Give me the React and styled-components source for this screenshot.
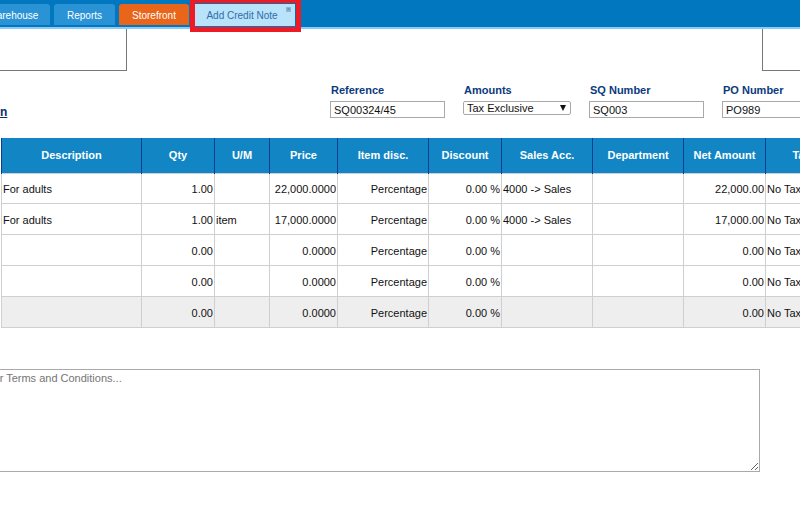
import { createGlobalStyle, styled } from "styled-components"

const GlobalStyle = createGlobalStyle`
    html, body {
        margin: 0;
        background: #fff;
        font-family: "Liberation Sans", Arial, sans-serif;
        font-size: 11px;
        color: #111;
    }
`

const Page = styled.div`
    width: 800px;
    height: 506px;
    overflow: hidden;
`

const Nav = styled.div`
    display: flex;
    align-items: flex-start;
    gap: 4px;
    height: 27px;
    margin-left: -24px;
    padding-top: 4px;
    box-sizing: border-box;
    background: #0077be;
`
const NavLine = styled.div`
    height: 2px;
    background: #8ccaf7;
`
const Tab = styled.div`
    display: flex;
    flex: none;
    align-items: center;
    justify-content: center;
    width: ${({ $width }) => $width}px;
    height: 21px;
    padding-top: 1px;
    box-sizing: border-box;
    border-radius: 3px 3px 0 0;
    background: ${({ $orange }) => ($orange ? "#e8651a" : "#2a93d5")};
    color: #fff;
    font-size: 10px;
`
const ActiveTab = styled(Tab)`
    position: relative;
    width: 101px;
    height: 23px;
    margin: -1px 0 0 2px;
    padding-right: 6px;
    border-radius: 0;
    background: #b9e3fb;
    color: #2d6ea8;
    border-top: 1px solid #0d6aa8;
    border-right: 1px solid #0d6aa8;
`
const CloseMark = styled.span`
    position: absolute;
    top: 3px;
    right: 4px;
    width: 5px;
    height: 5px;
    background: #8fb6d6;
    color: #4d86b5;
    font-size: 6px;
    line-height: 5px;
    text-align: center;
`
const Highlight = styled.div`
    position: absolute;
    top: -4px;
    left: -5px;
    right: -6px;
    bottom: -6px;
    border: solid #ed1c24;
    border-width: 3px 5px 5px 5px;
    pointer-events: none;
`

const TopBoxes = styled.div`
    display: flex;
    justify-content: space-between;
    height: 42px;
    margin-right: -10px;
`
const AddressBox = styled.div`
    width: ${({ $width }) => $width}px;
    box-sizing: border-box;
    border-bottom: 1px solid #777;
    border-${({ $side }) => $side}: 1px solid #777;
`

const FormRow = styled.div`
    display: flex;
    height: 54px;
    margin-top: 13px;
`
const LinkSlot = styled.div`
    flex: none;
    width: 330px;
    padding-top: 21px;
    box-sizing: border-box;
`
const BackLink = styled.a`
    color: #0b2f6b;
    font-size: 12px;
    font-weight: bold;
    text-decoration: underline;
`
const Fields = styled.div`
    display: flex;
    flex: none;
    gap: 18px;
`
const Field = styled.div`
    display: flex;
    flex: none;
    flex-direction: column;
    gap: 5px;
    width: ${({ $width }) => $width}px;
`
const Label = styled.label`
    height: 12px;
    padding-left: 1px;
    line-height: 12px;
    color: #0b3a7e;
    font-weight: bold;
`
const TextInput = styled.input`
    width: 100%;
    height: 17px;
    margin: 0;
    padding: 0 3px;
    box-sizing: border-box;
    border: 1px solid #a9a9a9;
    border-radius: 0;
    outline: none;
    font: 11px "Liberation Sans", Arial, sans-serif;
    color: #111;
`
const FakeSelect = styled.div`
    display: flex;
    align-items: center;
    justify-content: space-between;
    height: 14px;
    padding: 0 4px 0 3px;
    box-sizing: border-box;
    border: 1px solid #a9a9a9;
    border-radius: 2px;
    font-size: 11px;
`
const Caret = styled.span`
    width: 0;
    height: 0;
    border-left: 3.5px solid transparent;
    border-right: 3.5px solid transparent;
    border-top: 6px solid #111;
`

const TableWrap = styled.div`
    margin-left: 1px;
`
const Grid = styled.table`
    width: 786px;
    table-layout: fixed;
    border-collapse: collapse;
`
const HeadCell = styled.th`
    height: 35px;
    padding: 0;
    box-sizing: border-box;
    background: #1285c4;
    border-left: 1px solid #0d3e94;
    border-right: 1px solid #0d3e94;
    color: #fff;
    font-size: 11px;
    font-weight: bold;
    text-align: center;
`
const Row = styled.tr`
    background: ${({ $shaded }) => ($shaded ? "#eeeeee" : "#fff")};
`
const Cell = styled.td`
    height: ${({ $first }) => ($first ? 30 : 31)}px;
    padding: 2px 1px 0;
    box-sizing: border-box;
    border: 1px solid #cfcfcf;
    font-size: 11px;
    white-space: nowrap;
    overflow: hidden;
    text-align: ${({ $right }) => ($right ? "right" : "left")};
`

const Terms = styled.textarea`
    display: block;
    width: 786px;
    height: 103px;
    margin: 41px 0 0 -26px;
    padding: 2px;
    box-sizing: border-box;
    border: 1px solid #a9a9a9;
    border-radius: 0;
    outline: none;
    font: 11px "Liberation Sans", Arial, sans-serif;
`

const columns = [
    { title: "Description", width: 140 },
    { title: "Qty", width: 73, right: true },
    { title: "U/M", width: 55 },
    { title: "Price", width: 68, right: true },
    { title: "Item disc.", width: 91, right: true },
    { title: "Discount", width: 73, right: true },
    { title: "Sales Acc.", width: 91 },
    { title: "Department", width: 91 },
    { title: "Net Amount", width: 82, right: true },
    { title: "Tax", width: 72 },
]

const rows = [
    ["For adults", "1.00", "", "22,000.0000", "Percentage", "0.00 %", "4000 -> Sales", "", "22,000.00", "No Tax"],
    ["For adults", "1.00", "item", "17,000.0000", "Percentage", "0.00 %", "4000 -> Sales", "", "17,000.00", "No Tax"],
    ["", "0.00", "", "0.0000", "Percentage", "0.00 %", "", "", "0.00", "No Tax"],
    ["", "0.00", "", "0.0000", "Percentage", "0.00 %", "", "", "0.00", "No Tax"],
    ["", "0.00", "", "0.0000", "Percentage", "0.00 %", "", "", "0.00", "No Tax"],
]

export default function App() {
    return (
        <Page>
            <GlobalStyle />
            <Nav>
                <Tab $width={74}>Warehouse</Tab>
                <Tab $width={61}>Reports</Tab>
                <Tab $width={70} $orange>Storefront</Tab>
                <ActiveTab>
                    Add Credit Note
                    <CloseMark>×</CloseMark>
                    <Highlight />
                </ActiveTab>
            </Nav>
            <NavLine />
            <TopBoxes>
                <AddressBox $width={127} $side="right" />
                <AddressBox $width={48} $side="left" />
            </TopBoxes>
            <FormRow>
                <LinkSlot>
                    <BackLink>n</BackLink>
                </LinkSlot>
                <Fields>
                    <Field $width={115}>
                        <Label>Reference</Label>
                        <TextInput readOnly value="SQ00324/45" />
                    </Field>
                    <Field $width={108}>
                        <Label>Amounts</Label>
                        <FakeSelect>Tax Exclusive<Caret /></FakeSelect>
                    </Field>
                    <Field $width={115}>
                        <Label>SQ Number</Label>
                        <TextInput readOnly value="SQ003" />
                    </Field>
                    <Field $width={115}>
                        <Label>PO Number</Label>
                        <TextInput readOnly value="PO989" />
                    </Field>
                </Fields>
            </FormRow>
            <TableWrap>
                <Grid>
                    <colgroup>
                        {columns.map((col) => (
                            <col key={col.title} width={col.width} />
                        ))}
                    </colgroup>
                    <thead>
                        <tr>
                            {columns.map((col) => (
                                <HeadCell key={col.title}>{col.title}</HeadCell>
                            ))}
                        </tr>
                    </thead>
                    <tbody>
                        {rows.map((row, i) => (
                            <Row key={i} $shaded={i === rows.length - 1}>
                                {row.map((text, j) => (
                                    <Cell key={j} $first={i === 0} $right={columns[j].right}>{text}</Cell>
                                ))}
                            </Row>
                        ))}
                    </tbody>
                </Grid>
            </TableWrap>
            <Terms placeholder="Enter Terms and Conditions..." />
        </Page>
    )
}
